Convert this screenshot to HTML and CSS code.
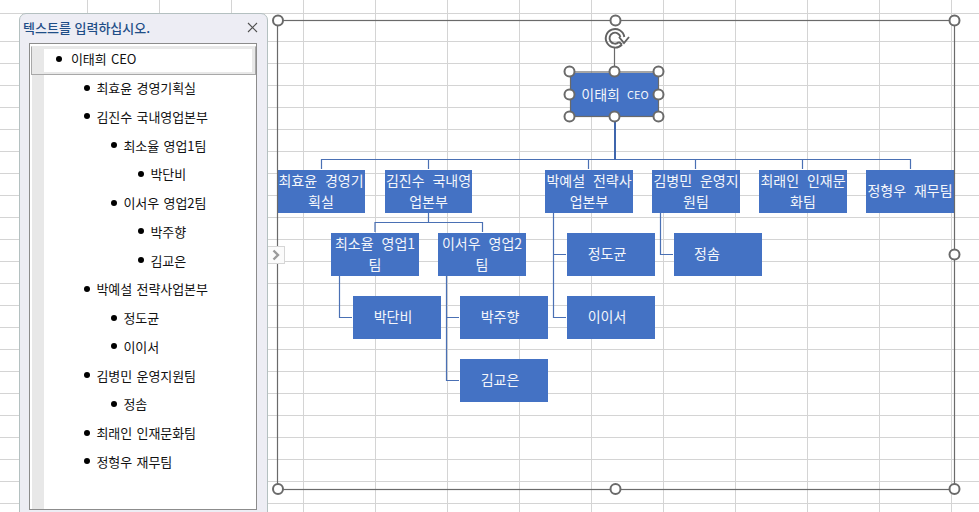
FILE: index.html
```html
<!DOCTYPE html>
<html lang="ko">
<head>
<meta charset="utf-8">
<title>SmartArt 텍스트 창</title>
<link rel="stylesheet" href="styles.css">
</head>
<body>
<main class="sheet">
  <svg class="links" width="979" height="512" viewBox="0 0 979 512" aria-hidden="true">
    <g class="link">
      <path d="M321.5 169V159.5H910.5V169"/>
      <path d="M428.5 159.5V169M588.5 159.5V169M695.5 159.5V169M802.5 159.5V169"/>
      <path class="trunk" d="M615 117V159.5"/>
      <path d="M428.5 213V222.5M375 232V222.5H482.5V232"/>
      <path d="M339.5 276V317.5H352"/>
      <path d="M446.5 276V380.5H459M446.5 317.5H459"/>
      <path d="M553.5 213V317.5H566M553.5 254.5H566"/>
      <path d="M660.5 213V254.5H673"/>
    </g>
  </svg>

  <div class="node ceo"><span>이태희</span><small>CEO</small></div>
  <div class="node a1">최효윤 경영기획실</div>
  <div class="node a2">김진수 국내영업본부</div>
  <div class="node a3">박예설 전략사업본부</div>
  <div class="node a4">김병민 운영지원팀</div>
  <div class="node a5">최래인 인재문화팀</div>
  <div class="node a6">정형우 재무팀</div>
  <div class="node b1">최소율 영업1팀</div>
  <div class="node b2">이서우 영업2팀</div>
  <div class="node b3 shift">정도균</div>
  <div class="node b4 shift-more">정솜</div>
  <div class="node c1 shift">박단비</div>
  <div class="node c2 shift">박주향</div>
  <div class="node c3 shift">이이서</div>
  <div class="node d1 shift">김교은</div>

  <svg class="selection" width="979" height="512" viewBox="0 0 979 512" aria-hidden="true">
    <rect class="frame" x="277.5" y="20.5" width="677" height="469"/>
    <path class="frame" d="M614.5 48V71"/>
    <rect class="frame" x="570.5" y="72" width="88" height="44.5"/>
    <g class="rotate">
      <path d="M622 44.5A9.3 9.3 0 1 1 624.3 37M619 42A5.5 5.5 0 1 1 620.4 37M622 44.5L619 42"/>
      <path d="M619 37L624 43L629 37"/>
    </g>
    <g class="handle">
      <circle cx="278" cy="20.5" r="5"/><circle cx="615.5" cy="20.5" r="5"/><circle cx="954.5" cy="20.5" r="5"/>
      <circle cx="954.5" cy="254.5" r="5"/>
      <circle cx="278" cy="489" r="5"/><circle cx="615.5" cy="489" r="5"/><circle cx="954.5" cy="489" r="5"/>
      <circle cx="569.5" cy="71.5" r="5"/><circle cx="614.5" cy="71.5" r="5"/><circle cx="658.5" cy="71.5" r="5"/>
      <circle cx="569.5" cy="94.5" r="5"/><circle cx="658.5" cy="94.5" r="5"/>
      <circle cx="569.5" cy="116.5" r="5"/><circle cx="614.5" cy="116.5" r="5"/><circle cx="658.5" cy="116.5" r="5"/>
    </g>
  </svg>

  <aside class="panel">
    <header class="panel-head">
      <h1>텍스트를 입력하십시오.</h1>
      <svg class="close" width="11" height="11" viewBox="0 0 11 11" aria-hidden="true"><path d="M1 1L10 10M10 1L1 10"/></svg>
    </header>
    <div class="outline">
      <ul class="tree">
        <li class="row l1 current">이태희 CEO</li>
        <li class="row l2">최효윤 경영기획실</li>
        <li class="row l2">김진수 국내영업본부</li>
        <li class="row l3">최소율 영업1팀</li>
        <li class="row l4">박단비</li>
        <li class="row l3">이서우 영업2팀</li>
        <li class="row l4">박주향</li>
        <li class="row l4">김교은</li>
        <li class="row l2">박예설 전략사업본부</li>
        <li class="row l3">정도균</li>
        <li class="row l3">이이서</li>
        <li class="row l2">김병민 운영지원팀</li>
        <li class="row l3">정솜</li>
        <li class="row l2">최래인 인재문화팀</li>
        <li class="row l2">정형우 재무팀</li>
      </ul>
    </div>
  </aside>
  <button class="toggle" type="button" aria-label="텍스트 창 접기">
    <svg width="8" height="12" viewBox="0 0 8 12" aria-hidden="true"><path d="M1.5 1.5L6 6L1.5 10.5"/></svg>
  </button>
</main>
</body>
</html>
```
FILE: styles.css
```css
* { box-sizing: border-box; }
html, body { margin: 0; padding: 0; }
body { width: 979px; height: 512px; overflow: hidden; background: #fff; }

.sheet {
  position: relative;
  width: 979px;
  height: 512px;
  overflow: hidden;
  font-family: "Noto Sans CJK KR", "Noto Sans", sans-serif;
  background-color: #fff;
  background-image:
    repeating-linear-gradient(to right, transparent 0 71px, #d4d4d4 71px 72px),
    repeating-linear-gradient(to bottom, transparent 0 21px, #d4d4d4 21px 22px);
  background-position: 16px 0, 0 20px;
}

.links, .selection { position: absolute; left: 0; top: 0; }
.links { z-index: 1; }
.selection { z-index: 3; }
.link path { fill: none; stroke: #4a70b4; stroke-width: 1.2; }
.link .trunk { stroke: #3f66ad; stroke-width: 2; }
.frame { fill: none; stroke: #6a6a6a; stroke-width: 1.2; }
.handle circle { fill: #fff; stroke: #6a6a6a; stroke-width: 2; }
.rotate path { fill: none; stroke: #626262; stroke-width: 1.9; }

.node {
  position: absolute;
  z-index: 2;
  width: 88px;
  height: 43px;
  display: flex;
  align-items: center;
  justify-content: center;
  padding-bottom: 2px;
  background: #4472c4;
  color: #f4f6fb;
  font-size: 14px;
  line-height: 21px;
  word-spacing: 4px;
  text-align: center;
}
.shift { padding-right: 8px; }
.shift-more { padding-right: 22px; }
.ceo { left: 571px; top: 73px; height: 44px; gap: 7px; }
.ceo small { font-size: 11px; }
.a1 { left: 277px; top: 170px; }
.a2 { left: 385px; top: 170px; width: 87px; }
.a3 { left: 545px; top: 170px; }
.a4 { left: 652px; top: 170px; }
.a5 { left: 759px; top: 170px; }
.a6 { left: 866px; top: 170px; }
.b1 { left: 331px; top: 233px; }
.b2 { left: 438px; top: 233px; }
.b3 { left: 567px; top: 233px; }
.b4 { left: 674px; top: 233px; }
.c1 { left: 353px; top: 296px; }
.c2 { left: 460px; top: 296px; }
.c3 { left: 567px; top: 296px; }
.d1 { left: 460px; top: 359px; }

.panel {
  position: absolute;
  z-index: 4;
  left: 19px;
  top: 13px;
  width: 249px;
  height: 512px;
  display: flex;
  flex-direction: column;
  padding: 0 10px 0 9px;
  background: #ededf4;
  border: 1px solid #b4c0c0;
  border-radius: 7px 7px 0 0;
}
.panel-head {
  height: 29px;
  display: flex;
  align-items: center;
  justify-content: space-between;
  margin-left: -6px;
  margin-right: -1px;
  padding-bottom: 2px;
  flex: none;
}
.panel-head h1 {
  margin: 0;
  font-size: 13px;
  font-weight: 500;
  color: #1f4e87;
}
.close path { fill: none; stroke: #505050; stroke-width: 1.1; }
.outline {
  height: 467px;
  flex: none;
  padding: 2px;
  background: #fff;
  border: 1px solid #8c8c8c;
}
.tree {
  list-style: none;
  margin: 0;
  padding: 0;
  height: 463px;
  background: linear-gradient(to right, #e8e8e8 0 12px, #fff 12px);
}
.row {
  display: flex;
  align-items: center;
  height: 28.75px;
  padding-bottom: 3px;
  font-size: 13px;
  word-spacing: 1px;
  letter-spacing: -0.1px;
  color: #111;
  white-space: pre;
}
.row::before {
  content: "";
  width: 6px;
  height: 6px;
  border-radius: 50%;
  background: #000;
  flex: none;
  margin-right: 6.5px;
}
.l1 { padding-left: 24px; }
.l2 { padding-left: 52px; }
.l3 { padding-left: 79px; }
.l4 { padding-left: 106px; }
.l1::before { margin-right: 9px; }
.current {
  width: 225px;
  margin-left: -1px;
  background: linear-gradient(to bottom, #e8e8e8 0 2px, transparent 2px);
  border: 1px solid #a8a8a8;
  border-top-color: #e8e8e8;
  box-shadow: inset -3px 0 0 #e8e8e8, inset 0 -2px 0 #e8e8e8;
}

.toggle {
  position: absolute;
  z-index: 5;
  left: 268px;
  top: 246px;
  width: 17px;
  height: 18px;
  padding: 0;
  display: flex;
  align-items: center;
  justify-content: center;
  background: #fbfbfb;
  border: 1px solid #d6d6d6;
  border-left: 0;
}
.toggle path { fill: none; stroke: #9a9a9a; stroke-width: 2.4; }
```
